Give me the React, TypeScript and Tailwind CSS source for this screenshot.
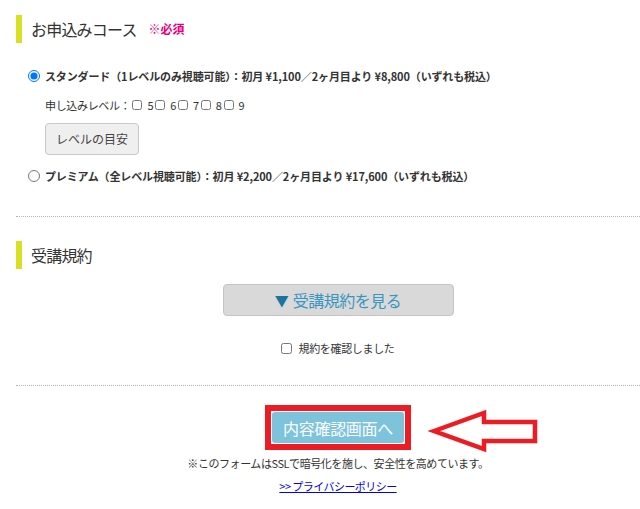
export default function App() {
  return (
    <div className="relative w-[640px] h-[509px] overflow-hidden bg-white text-[#333] font-['Noto_Sans_CJK_JP','Noto_Sans',sans-serif]">
      {/* Section 1 heading */}
      <div className="pt-[15px] pl-[16px]">
        <div className="flex items-center h-[28px] border-l-[6px] border-[#d9df21] pl-[9px]">
          <span className="text-[16px] leading-none tracking-[-0.05em] text-[#333]">お申込みコース</span>
          <span className="ml-[12px] text-[12px] leading-none font-bold text-[#e5007f]">※必須</span>
        </div>
      </div>

      {/* Option 1 */}
      <div className="pl-[28px] mt-[26px] flex items-center h-[14px] gap-[5px]">
        <input type="radio" name="course" defaultChecked className="w-[12px] h-[12px] m-0" />
        <span className="text-[11px] leading-none font-bold tracking-[-0.012em]">
          スタンダード（1レベルのみ視聴可能）：初月 ¥1,100／2ヶ月目より ¥8,800（いずれも税込）
        </span>
      </div>

      <div className="pl-[45px] mt-[15px] flex items-center h-[14px] text-[11px] leading-none tracking-[-0.03em]">
        <span>申し込みレベル：</span>
        {["5", "6", "7", "8", "9"].map((n) => (
          <label key={n} className="flex items-center">
            <input type="checkbox" className="w-[10px] h-[10px] m-0 ml-[2px]" />
            <span className="ml-[5px]">{n}</span>
          </label>
        ))}
      </div>

      <div className="pl-[45px] mt-[11px]">
        <button className="w-[94px] h-[32px] bg-[#efefef] border border-[#c8c8c8] rounded-[4px] text-[12px] text-[#444] leading-none">
          レベルの目安
        </button>
      </div>

      {/* Option 2 */}
      <div className="pl-[28px] mt-[14px] flex items-center h-[14px] gap-[5px]">
        <input type="radio" name="course" className="w-[12px] h-[12px] m-0" />
        <span className="text-[11px] leading-none font-bold tracking-[-0.012em]">
          プレミアム（全レベル視聴可能）：初月 ¥2,200／2ヶ月目より ¥17,600（いずれも税込）
        </span>
      </div>

      <div className="ml-[16px] mt-[33px] border-t border-dotted border-[#b5b5b5]" />

      {/* Section 2 heading */}
      <div className="pl-[16px] mt-[24px]">
        <div className="flex items-center h-[28px] border-l-[6px] border-[#d9df21] pl-[9px]">
          <span className="text-[16px] leading-none tracking-[-0.05em] text-[#333]">受講規約</span>
        </div>
      </div>

      <div className="pl-[36px] mt-[15px] flex justify-center">
        <button className="w-[231px] h-[32px] bg-[#d9d9d9] border border-[#c4c4c4] rounded-[4px] flex items-center justify-center gap-[4px] leading-none">
          <span className="text-[14px] text-[#17759f]">▼</span>
          <span className="text-[16px] tracking-[-0.03em] text-[#3a95bf]">受講規約を見る</span>
        </button>
      </div>

      <div className="pl-[36px] mt-[25px] flex justify-center">
        <label className="flex items-center h-[14px] gap-[6px] text-[11px] leading-none tracking-[-0.03em] text-[#333]">
          <input type="checkbox" className="w-[11px] h-[11px] m-0" />
          <span>規約を確認しました</span>
        </label>
      </div>

      <div className="ml-[16px] mt-[30px] border-t border-dotted border-[#b5b5b5]" />

      {/* Submit */}
      <div className="relative pl-[36px] mt-[19px] flex justify-center">
        <div className="border-[6px] border-[#ed1c24] p-[1px]">
          <button className="w-[132px] h-[31px] bg-[#7dc3dc] rounded-[3px] text-[16px] leading-none tracking-[-0.02em] text-white">
            内容確認画面へ
          </button>
        </div>
        <svg
          className="absolute left-[428px] top-[1px]"
          width="112"
          height="48"
          viewBox="0 0 112 48"
        >
          <polygon
            points="6,25 56,7 56,16 107,16 107,35 56,35 56,43"
            fill="white"
            stroke="#ed1c24"
            strokeWidth="4.5"
            strokeLinejoin="miter"
          />
        </svg>
      </div>

      <div className="pl-[36px] mt-[6px] flex justify-center">
        <span className="h-[14px] flex items-center text-[11px] leading-none tracking-[-0.04em] text-[#333]">
          ※このフォームはSSLで暗号化を施し、安全性を高めています。
        </span>
      </div>

      <div className="pl-[36px] mt-[9px] flex justify-center">
        <a href="#" className="h-[14px] flex items-center text-[11px] leading-none tracking-[-0.05em] text-[#0000ee] underline">
          &gt;&gt; プライバシーポリシー
        </a>
      </div>
    </div>
  );
}
